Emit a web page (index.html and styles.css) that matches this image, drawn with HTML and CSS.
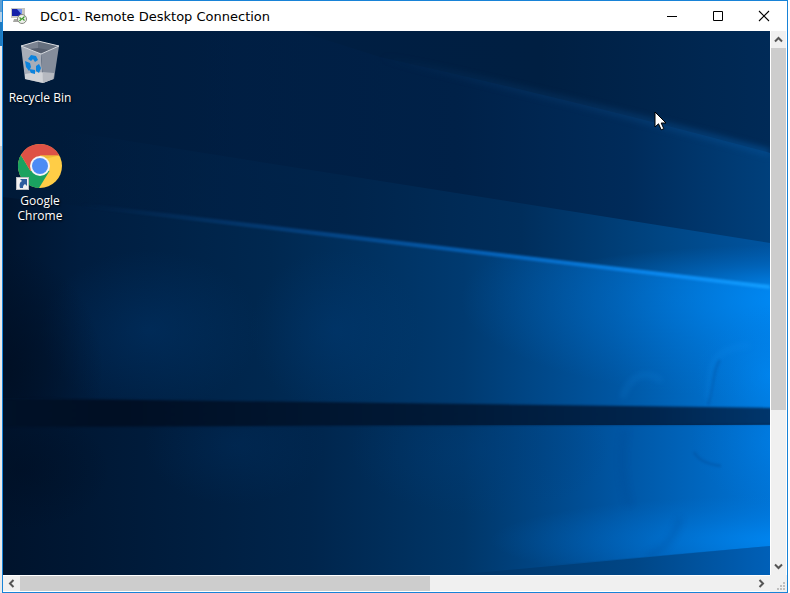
FILE: index.html
```html
<!DOCTYPE html>
<html lang="en">
<head>
    <meta charset="UTF-8">
    <meta name="viewport" content="width=device-width, initial-scale=1.0">
    <title>DC01- Remote Desktop Connection</title>
    <link rel="stylesheet" href="styles.css">
</head>
<body>
    <div class="window">
        <header class="titlebar">
            <svg class="app-icon" width="16" height="16" viewBox="0 0 16 16" aria-hidden="true">
                <rect x="0" y="0" width="12" height="10" fill="#c9c9c4"/>
                <rect x="1" y="1" width="10" height="7" fill="#1420a8"/>
                <path d="M6 1h5v6z" fill="#6f8ff0"/>
                <rect x="12" y="0" width="2" height="8" fill="#c4c4be"/>
                <path d="M3 11h6l-1 3H2z" fill="#a6a6a2"/>
                <circle cx="11" cy="11" r="4.500" fill="#eef1ec" stroke="#84877f"/>
                <path d="M8.500 9.500l2 1.500-2 2M13.500 8.500l-2 2 2 2" fill="none" stroke="#3c9a2c" stroke-width="1.200"/>
            </svg>
            <h1 class="title">DC01- Remote Desktop Connection</h1>
            <div class="window-buttons">
                <button type="button" class="window-btn" aria-label="Minimize">
                    <svg width="12" height="12" viewBox="0 0 12 12"><path d="M1 6.500h10" stroke="#000"/></svg>
                </button>
                <button type="button" class="window-btn" aria-label="Maximize">
                    <svg width="12" height="12" viewBox="0 0 12 12"><path d="M1.500 1.500h9v9h-9z" fill="none" stroke="#000"/></svg>
                </button>
                <button type="button" class="window-btn" aria-label="Close">
                    <svg width="12" height="12" viewBox="0 0 12 12"><path d="M1 1l10 10M11 1L1 11" stroke="#000" stroke-width="1.100"/></svg>
                </button>
            </div>
        </header>

        <main class="desktop">
            <svg class="wallpaper" viewBox="3 31 767 544" preserveAspectRatio="none" aria-hidden="true">
                <defs>
                    <linearGradient id="sky" gradientUnits="userSpaceOnUse" x1="3" y1="0" x2="770" y2="0">
                        <stop offset="0" stop-color="#001a38"/>
                        <stop offset=".3" stop-color="#001e42"/>
                        <stop offset=".7" stop-color="#001f42"/>
                        <stop offset="1" stop-color="#002a57"/>
                    </linearGradient>
                    <linearGradient id="upper" gradientUnits="userSpaceOnUse" x1="200" y1="0" x2="770" y2="0">
                        <stop offset="0" stop-color="#002048" stop-opacity="0"/>
                        <stop offset=".45" stop-color="#002148"/>
                        <stop offset=".75" stop-color="#002b5a"/>
                        <stop offset="1" stop-color="#00407c"/>
                    </linearGradient>
                    <linearGradient id="middle" gradientUnits="userSpaceOnUse" x1="60" y1="0" x2="770" y2="0">
                        <stop offset="0" stop-color="#002248" stop-opacity="0"/>
                        <stop offset=".4" stop-color="#00244b"/>
                        <stop offset=".65" stop-color="#002e5c"/>
                        <stop offset=".85" stop-color="#004684"/>
                        <stop offset="1" stop-color="#0054a0"/>
                    </linearGradient>
                    <linearGradient id="lower" gradientUnits="userSpaceOnUse" x1="3" y1="0" x2="770" y2="0">
                        <stop offset="0" stop-color="#00142e"/>
                        <stop offset=".1" stop-color="#001d3f"/>
                        <stop offset=".35" stop-color="#002850"/>
                        <stop offset=".6" stop-color="#003a70"/>
                        <stop offset=".8" stop-color="#0056a2"/>
                        <stop offset="1" stop-color="#007ce0"/>
                    </linearGradient>
                    <linearGradient id="bottom" gradientUnits="userSpaceOnUse" x1="3" y1="0" x2="770" y2="0">
                        <stop offset="0" stop-color="#00132c"/>
                        <stop offset=".2" stop-color="#001c3c"/>
                        <stop offset=".4" stop-color="#00254c"/>
                        <stop offset=".6" stop-color="#003668"/>
                        <stop offset=".8" stop-color="#0055a2"/>
                        <stop offset="1" stop-color="#0074d6"/>
                    </linearGradient>
                    <linearGradient id="band" gradientUnits="userSpaceOnUse" x1="3" y1="0" x2="770" y2="0">
                        <stop offset="0" stop-color="#001127"/>
                        <stop offset=".15" stop-color="#000f24"/>
                        <stop offset=".6" stop-color="#001a38"/>
                        <stop offset=".85" stop-color="#00254e"/>
                        <stop offset="1" stop-color="#00366c"/>
                    </linearGradient>
                    <linearGradient id="corner" gradientUnits="userSpaceOnUse" x1="430" y1="0" x2="770" y2="0">
                        <stop offset="0" stop-color="#00305f"/>
                        <stop offset=".6" stop-color="#004686"/>
                        <stop offset="1" stop-color="#0060b8"/>
                    </linearGradient>
                    <linearGradient id="beam" gradientUnits="userSpaceOnUse" x1="80" y1="0" x2="770" y2="0">
                        <stop offset="0" stop-color="#0a4a88" stop-opacity="0"/>
                        <stop offset=".3" stop-color="#07509a" stop-opacity=".6"/>
                        <stop offset=".6" stop-color="#0564bc"/>
                        <stop offset=".85" stop-color="#0a8af2"/>
                        <stop offset="1" stop-color="#129eff"/>
                    </linearGradient>
                    <linearGradient id="faint" gradientUnits="userSpaceOnUse" x1="380" y1="0" x2="770" y2="0">
                        <stop offset="0" stop-color="#0a4880" stop-opacity="0"/>
                        <stop offset=".5" stop-color="#083c70" stop-opacity=".5"/>
                        <stop offset="1" stop-color="#034a8c"/>
                    </linearGradient>
                    <radialGradient id="glow">
                        <stop offset="0" stop-color="#0090ff" stop-opacity=".9"/>
                        <stop offset=".5" stop-color="#0084f0" stop-opacity=".4"/>
                        <stop offset="1" stop-color="#0078e0" stop-opacity="0"/>
                    </radialGradient>
                    <radialGradient id="haze">
                        <stop offset="0" stop-color="#004080" stop-opacity=".3"/>
                        <stop offset="1" stop-color="#004080" stop-opacity="0"/>
                    </radialGradient>
                    <radialGradient id="shade">
                        <stop offset="0" stop-color="#000e22" stop-opacity=".8"/>
                        <stop offset="1" stop-color="#000e22" stop-opacity="0"/>
                    </radialGradient>
                    <clipPath id="middleClip"><path d="M60 130L770 243V287L60 203z"/></clipPath>
                    <clipPath id="lowerClip"><path d="M3 197L770 287V408L3 398z"/></clipPath>
                    <clipPath id="bottomClip"><path d="M3 427L770 424V546L430 575H3z"/></clipPath>
                    <filter id="soft" x="-10%" y="-50%" width="120%" height="200%" color-interpolation-filters="sRGB"><feGaussianBlur stdDeviation="1"/></filter>
                    <filter id="softer" x="-20%" y="-50%" width="140%" height="200%" color-interpolation-filters="sRGB"><feGaussianBlur stdDeviation="3"/></filter>
                </defs>

                <rect x="3" y="31" width="767" height="544" fill="url(#sky)"/>
                <path d="M200 0L380 57Q590 104 770 153V260L200 170z" fill="url(#upper)"/>
                <path d="M380 57Q590 104 770 153" fill="none" stroke="url(#faint)" stroke-width="6" filter="url(#softer)"/>
                <path d="M60 130L770 243V290L60 206z" fill="url(#middle)"/>
                <g clip-path="url(#middleClip)">
                    <ellipse cx="790" cy="285" rx="260" ry="40" fill="url(#glow)" opacity=".8"/>
                </g>

                <path d="M3 197L770 287V410H3z" fill="url(#lower)"/>
                <g clip-path="url(#lowerClip)">
                    <ellipse cx="790" cy="300" rx="330" ry="100" fill="url(#glow)" opacity=".7"/>
                    <ellipse cx="770" cy="375" rx="75" ry="70" fill="url(#glow)" opacity=".4"/>
                    <ellipse cx="335" cy="330" rx="85" ry="80" fill="url(#haze)"/>
                    <ellipse cx="150" cy="330" rx="110" ry="80" fill="url(#haze)"/>
                    <ellipse cx="3" cy="370" rx="100" ry="120" fill="url(#shade)"/>
                    <path d="M708 400c5-30-4-50 42-55M622 398c8-22 22-30 40-17" fill="none" stroke="#23a0ff" stroke-width="4" opacity=".18" filter="url(#softer)"/>
                    <path d="M720 360c-8 10-6 30-12 45" fill="none" stroke="#004c98" stroke-width="3" opacity=".25" filter="url(#soft)"/>
                </g>
                <path d="M80 205L770 287" stroke="url(#beam)" stroke-width="4" filter="url(#soft)"/>

                <path d="M3 425H770V575H3z" fill="url(#bottom)"/>
                <g clip-path="url(#bottomClip)">
                    <ellipse cx="800" cy="540" rx="310" ry="45" fill="url(#glow)" opacity=".75"/>
                    <ellipse cx="790" cy="440" rx="100" ry="70" fill="url(#glow)" opacity=".4"/>
                    <ellipse cx="480" cy="450" rx="130" ry="65" fill="url(#haze)"/>
                    <ellipse cx="235" cy="445" rx="90" ry="60" fill="url(#haze)" opacity=".6"/>
                    <ellipse cx="20" cy="470" rx="90" ry="60" fill="url(#shade)" opacity=".6"/>
                    <path d="M694 452c5 9 14 12 27 14" fill="none" stroke="#004c9a" stroke-width="3" opacity=".35" filter="url(#soft)"/>
                    <path d="M680 518c-4 15-15 34-34 38M626 430c-6 20-4 50 3 75" fill="none" stroke="#00448c" stroke-width="6" opacity=".2" filter="url(#softer)"/>
                </g>
                <path d="M430 577L770 546V577z" fill="url(#corner)"/>
                <path d="M-10 398L780 408V424L-10 427z" fill="url(#band)" filter="url(#soft)"/>
            </svg>

            <div class="shortcuts">
                <a href="#recycle-bin" class="shortcut">
                    <svg class="shortcut-icon" width="48" height="48" viewBox="0 0 48 48" aria-hidden="true">
                        <path d="M5 7L22 2l21 5-18 8z" fill="#555e6e"/>
                        <path d="M5 7L22 2v7l-9 1z" fill="#7b8391"/>
                        <path d="M22 2l21 5-10 4-11-2z" fill="#656f7e"/>
                        <path d="M5 7l20 8 2 29-18-4z" fill="#a7adb8"/>
                        <path d="M43 7l-18 8 2 29 11-4z" fill="#858d9b"/>
                        <path d="M9 35l12-2 17 1-1 6-10 4-18-4z" fill="#d8d9dc" opacity=".85"/>
                        <path d="M27 34l11 0-1 6-10 4z" fill="#b6b9c0"/>
                        <path d="M5 7L22 2l21 5-18 8z" fill="none" stroke="#d8dbe0" stroke-width="1"/>
                        <g fill="#0b83dd">
                            <path d="M12 20l3-4 5 1 2 4-3 2-2-3-2 2z"/>
                            <path d="M9 22l5 2 1 4-2 4-3-4z"/>
                            <path d="M13 30l6 1v4l-4-1z"/>
                            <path d="M20 27l3-2 2 4-2 5-3-2z"/>
                        </g>
                    </svg>
                    <span class="shortcut-name">Recycle Bin</span>
                </a>
                <a href="#google-chrome" class="shortcut">
                    <svg class="shortcut-icon" width="48" height="48" viewBox="0 0 48 48" aria-hidden="true">
                        <circle cx="24" cy="24" r="22" fill="#ffcd46"/>
                        <path d="M4.900 13A22 22 0 0 0 23 46L33.500 29 24 24 14.500 29z" fill="#1aa260"/>
                        <path d="M4.900 13A22 22 0 0 1 43.300 13.500H24L14.500 29z" fill="#de5246"/>
                        <path d="M24 13.500h19.300l-13 3z" fill="#e8b52c" opacity=".7"/>
                        <circle cx="24" cy="24" r="10" fill="#f4f4f4"/>
                        <circle cx="24" cy="24" r="8" fill="#4c8bf5"/>
                        <rect x="0.500" y="35.500" width="12" height="12" fill="#f2f2f2" stroke="#b9bcc2"/>
                        <path d="M4 37h7v7l-2-2c-2 1-2 3-2 4H4c-1-4 0-6 2-7z" fill="#2c5c9e"/>
                    </svg>
                    <span class="shortcut-name">Google Chrome</span>
                </a>
            </div>

            <svg class="cursor" width="13" height="20" viewBox="0 0 13 20" aria-hidden="true">
                <path d="M1 1v15l3.500-3.200 2.700 6 2.600-1.100-2.600-5.700H12z" fill="#fff" stroke="#000"/>
            </svg>
        </main>

        <div class="scrollbar scrollbar-vertical">
            <button type="button" class="scroll-btn" aria-label="Scroll up">
                <svg width="9" height="9" viewBox="0 0 9 9"><path d="M1 6.500l3.500-3.500L8 6.500" fill="none" stroke="#555" stroke-width="2"/></svg>
            </button>
            <div class="track"><div class="thumb"></div></div>
            <button type="button" class="scroll-btn" aria-label="Scroll down">
                <svg width="9" height="9" viewBox="0 0 9 9"><path d="M1 2.500L4.500 6 8 2.500" fill="none" stroke="#555" stroke-width="2"/></svg>
            </button>
        </div>

        <div class="scrollbar scrollbar-horizontal">
            <button type="button" class="scroll-btn" aria-label="Scroll left">
                <svg width="9" height="9" viewBox="0 0 9 9"><path d="M6.500 1L3 4.500 6.500 8" fill="none" stroke="#555" stroke-width="2"/></svg>
            </button>
            <div class="track"><div class="thumb"></div></div>
            <button type="button" class="scroll-btn" aria-label="Scroll right">
                <svg width="9" height="9" viewBox="0 0 9 9"><path d="M2.500 1L6 4.500 2.500 8" fill="none" stroke="#555" stroke-width="2"/></svg>
            </button>
        </div>

        <div class="grip">
            <svg width="8" height="8" viewBox="0 0 8 8" aria-hidden="true">
                <path d="M6 0h2v2H6zM3 3h2v2H3zM6 3h2v2H6zM0 6h2v2H0zM3 6h2v2H3zM6 6h2v2H6z" fill="#bfbfbf"/>
            </svg>
        </div>
    </div>
</body>
</html>
```
FILE: styles.css
```css
* {
    box-sizing: border-box;
}
body {
    margin: 0;
    height: 100vh;
    padding: 0 2px;
    overflow: hidden;
    font-family: "Open Sans", "Noto Sans", sans-serif;
    /* sliver of the window behind, down the left edge */
    background: linear-gradient(#5d9fd4 0 12px, #b4cfe6 12px 22px, #1e7ac0 22px 46px, #e9eaec 46px 146px, #cccccc 146px 170px, #e9eaec 170px) left / 2px 100% no-repeat white;
}
button {
    margin: 0;
    padding: 0;
    border: none;
    background: none;
    display: flex;
    align-items: center;
    justify-content: center;
}
.window {
    height: 100%;
    display: grid;
    grid-template-columns: 1fr 17px;
    grid-template-rows: 30px 1fr 17px;
    border: 1px solid #1883d7;
    background: #f0f0f0;
}

/* Title bar */
.titlebar {
    grid-column: 1 / -1;
    display: flex;
    align-items: center;
    padding-left: 8px;
    background: white;
}
.title {
    flex: 1;
    margin: 0 0 0 13px;
    font-family: "DejaVu Sans", Verdana, sans-serif;
    font-size: 13px;
    font-weight: normal;
    color: black;
}
.window-buttons {
    display: flex;
    height: 100%;
}
.window-btn {
    width: 46px;
}
.window-btn:hover {
    background: #e5e5e5;
}

/* Remote desktop */
.desktop {
    position: relative;
    min-height: 0;
    overflow: hidden;
    background: #001e42;
}
.wallpaper {
    position: absolute;
    inset: 0;
    width: 100%;
    height: 100%;
}
.shortcuts {
    position: relative;
    display: flex;
    flex-direction: column;
    width: 74px;
    padding-top: 8px;
    gap: 32px;
}
.shortcut {
    display: flex;
    flex-direction: column;
    align-items: center;
    min-height: 71px;
    gap: 3px;
    color: white;
    text-decoration: none;
}
.shortcut-name {
    max-width: 64px;
    font-size: 12px;
    line-height: 15px;
    text-align: center;
    text-shadow: 1px 1px 2px black;
}
.cursor {
    position: absolute;
    left: 651px;
    top: 80px;
}

/* Scroll bars */
.scrollbar {
    display: flex;
    background: #f0f0f0;
}
.scroll-btn {
    flex: 0 0 17px;
}
.track {
    flex: 1;
}
.thumb {
    background: #cdcdcd;
}
.scrollbar-vertical {
    flex-direction: column;
    border-left: 1px solid white;
    border-right: 1px solid white;
}
.scrollbar-vertical .thumb {
    height: 71%;
}
.scrollbar-horizontal {
    border-top: 1px solid white;
    border-bottom: 1px solid white;
}
.scrollbar-horizontal .track {
    display: flex;
}
.scrollbar-horizontal .thumb {
    width: 56%;
}
.grip {
    display: flex;
    align-items: flex-end;
    justify-content: flex-end;
    padding: 2px;
}
```
